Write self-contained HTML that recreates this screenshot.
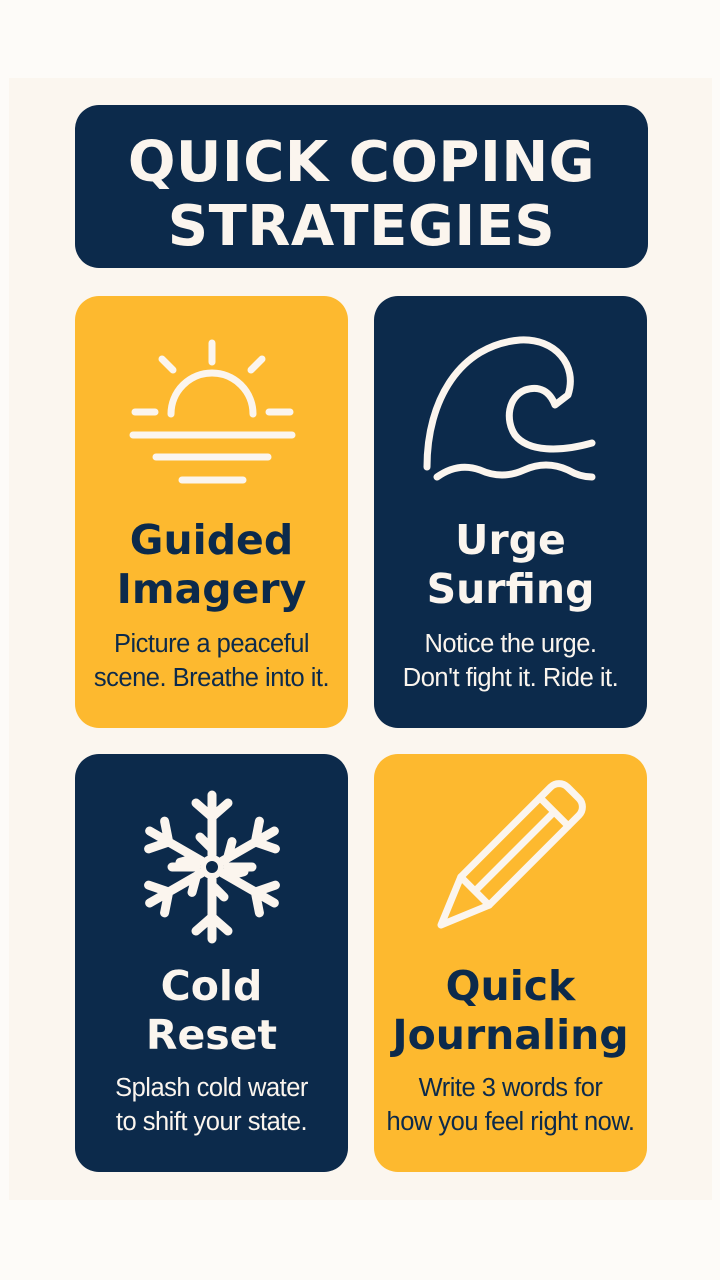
<!DOCTYPE html>
<html><head><meta charset="utf-8"><style>
*{margin:0;padding:0;box-sizing:border-box}
body{width:720px;height:1280px;background:#fdfbf8;position:relative;font-family:"DejaVu Sans","Liberation Sans",sans-serif;overflow:hidden}
.panel{position:absolute;left:9px;top:78px;width:703px;height:1122px;background:#fbf6ef}
.box{position:absolute;border-radius:24px}
.navy{background:#0c2a4b;color:#fbf5ee}
.yel{background:#fdb92f;color:#0c2a4b}
.title{left:75px;top:105px;width:573px;height:163px;text-align:center;font-weight:bold;font-size:56px;line-height:64px;padding-top:26px;letter-spacing:0.5px}
.card{width:273px;height:432px}
.h{position:absolute;left:0;width:100%;text-align:center;font-weight:bold;font-size:41px;line-height:49px}
.p{position:absolute;left:0;width:100%;text-align:center;font-size:25.5px;line-height:34px;font-family:"Liberation Sans",sans-serif;letter-spacing:-0.5px}
svg{position:absolute;left:0;top:0}
</style></head><body>
<div class="panel"></div>
<div class="box navy title">QUICK COPING<br>STRATEGIES</div>
<div class="box yel card" style="left:75px;top:296px"><div class="h" style="top:220px">Guided<br>Imagery</div><div class="p" style="top:331px">Picture a peaceful<br>scene. Breathe into it.</div></div>
<div class="box navy card" style="left:374px;top:296px"><div class="h" style="top:220px">Urge<br>Surfing</div><div class="p" style="top:331px">Notice the urge.<br>Don't fight it. Ride it.</div></div>
<div class="box navy card" style="left:75px;top:754px;height:418px"><div class="h" style="top:208px">Cold<br>Reset</div><div class="p" style="top:317px">Splash cold water<br>to shift your state.</div></div>
<div class="box yel card" style="left:374px;top:754px;height:418px"><div class="h" style="top:208px">Quick<br>Journaling</div><div class="p" style="top:317px">Write 3 words for<br>how you feel right now.</div></div>
<svg width="720" height="1280" fill="none" stroke="#fbf5ee" stroke-linecap="round" stroke-linejoin="round">
<g stroke-width="7">
<path d="M212,343V362M162,359L173,370M262,359L251,370M135,412H155M269,412H290"/>
<path d="M171,414A41,41 0 0 1 253,414"/>
<path d="M133,435H292M156,457H268M182,480H243"/>
</g>
<g stroke-width="7">
<path d="M427,467C427,400 460,345 520,340C555,338 578,365 568,395L555,405C550,392 540,385 525,390C508,397 505,420 515,435C528,452 560,452 592,443"/>
<path d="M437,477Q458,462 480,470Q502,480 524,470Q546,460 568,470Q580,477 592,477"/>
</g>
<g stroke-width="9" transform="translate(212,867)">
<g id="arm"><path d="M0,-12V-72M-16,-64L0,-50L16,-64M-12,-30L0,-18"/></g>
<use href="#arm" transform="rotate(60)"/><use href="#arm" transform="rotate(120)"/><use href="#arm" transform="rotate(180)"/><use href="#arm" transform="rotate(240)"/><use href="#arm" transform="rotate(300)"/>
<path d="M-40,0H-16M16,0H40"/>
<circle r="9" stroke-width="6"/>
</g>
<g stroke-width="7" transform="translate(441,925) rotate(-45)">
<path d="M0,0L48,-20H175A12,12 0 0 1 187,-8V8A12,12 0 0 1 175,20H48Z"/>
<path d="M48,-20V20M160,-20V20M48,0H160"/>
</g>
</svg>
</body></html>
